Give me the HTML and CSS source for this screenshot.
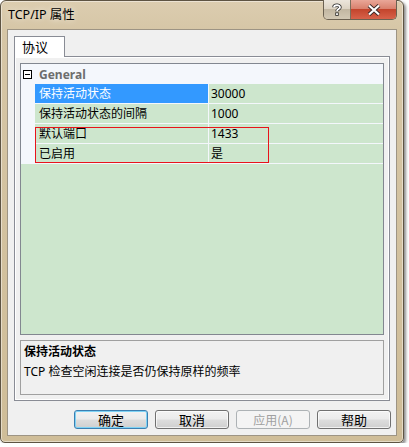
FILE: index.html
```html
<!DOCTYPE html>
<html lang="zh-CN">
<head>
<meta charset="utf-8">
<title>TCP/IP 属性</title>
<link rel="stylesheet" href="styles.css">
</head>
<body>
<div class="window">
  <div class="titlebar">
    <div class="title">TCP/IP 属性</div>
    <div class="caption-buttons">
      <div class="cap help">
        <svg width="12" height="13" viewBox="0 0 12 13"><path d="M3 4.2 C3 1.8 9 1.4 9 4.2 C9 6.2 6 6 6 8.2" fill="none" stroke="#2b2b2b" stroke-width="3.4"/><path d="M3 4.2 C3 1.8 9 1.4 9 4.2 C9 6.2 6 6 6 8.2" fill="none" stroke="#fff" stroke-width="1.8"/><rect x="4.3" y="9.4" width="3.4" height="3.4" fill="#2b2b2b"/><rect x="5.1" y="10.2" width="1.8" height="1.8" fill="#fff"/></svg>
      </div>
      <div class="cap close">
        <svg width="14" height="12" viewBox="0 0 14 12"><path d="M2 1.5 L12 10.5 M12 1.5 L2 10.5" stroke="#3a2a28" stroke-width="4"/><path d="M2 1.5 L12 10.5 M12 1.5 L2 10.5" stroke="#fff" stroke-width="2.2"/></svg>
      </div>
    </div>
  </div>
  <div class="client">
    <div class="tabs">
      <div class="tab">协议</div>
    </div>
    <div class="panel">
      <div class="grid">
        <div class="category">
          <span class="toggle"></span>
          <span class="cat-name">General</span>
        </div>
        <div class="rows">
          <div class="row">
            <span class="gutter"></span>
            <span class="name selected">保持活动状态</span>
            <span class="value">30000</span>
          </div>
          <div class="row">
            <span class="gutter"></span>
            <span class="name">保持活动状态的间隔</span>
            <span class="value">1000</span>
          </div>
          <div class="row">
            <span class="gutter"></span>
            <span class="name">默认端口</span>
            <span class="value">1433</span>
          </div>
          <div class="row">
            <span class="gutter"></span>
            <span class="name">已启用</span>
            <span class="value">是</span>
          </div>
          <div class="highlight"></div>
        </div>
      </div>
      <div class="desc">
        <div class="desc-title">保持活动状态</div>
        <div class="desc-text">TCP 检查空闲连接是否仍保持原样的频率</div>
      </div>
    </div>
    <div class="buttons">
      <button class="btn default">确定</button>
      <button class="btn">取消</button>
      <button class="btn disabled">应用(A)</button>
      <button class="btn">帮助</button>
    </div>
  </div>
</div>
</body>
</html>
```
FILE: styles.css
```css
* { box-sizing: border-box; }
html, body { margin: 0; padding: 0; background: #ffffff; }
body {
  font-family: "Noto Sans", "Noto Sans CJK SC", sans-serif;
  font-size: 12px;
  color: #000;
}
.window {
  width: 404px;
  height: 443px;
  border: 1px solid #5e5443;
  border-radius: 6px 6px 5px 5px;
  background: linear-gradient(to bottom, #dccdb0 0px, #d6c6a6 30px, #cfbd98 100%);
  box-shadow: 2px 2px 3px rgba(0,0,0,0.45), inset 0 0 0 1px rgba(255,255,255,0.45);
  display: flex;
  flex-direction: column;
}
.titlebar {
  height: 28px;
  display: flex;
  align-items: flex-start;
}
.title {
  padding: 5px 0 0 7px;
  font-size: 12.5px;
  line-height: 17px;
  color: #000;
  text-shadow: 0 0 6px rgba(255,255,255,0.8);
}
.caption-buttons {
  margin-left: auto;
  margin-right: 6px;
  margin-top: -1px;
  display: flex;
  height: 20px;
  border: 1px solid #6b6151;
  border-top: none;
  border-radius: 0 0 5px 5px;
  overflow: hidden;
}
.cap {
  height: 19px;
  display: flex;
  align-items: center;
  justify-content: center;
}
.help {
  width: 27px;
  background: linear-gradient(to bottom, #ece6dc 0%, #ddd4c4 45%, #c2b7a2 50%, #d2c8b4 100%);
  border-right: 1px solid #7b6f5c;
}
.close {
  width: 45px;
  background: linear-gradient(to bottom, #e9a798 0%, #d9816e 45%, #c3452d 50%, #d8624a 100%);
}
.client {
  margin: 0 6px;
  height: 407px;
  border: 1px solid #9d9484;
  background: #f0f0f0;
  padding: 6px 5px 0 6px;
  display: flex;
  flex-direction: column;
}
.tabs {
  display: flex;
  position: relative;
  z-index: 1;
}
.tab {
  width: 51px;
  height: 21px;
  border: 1px solid #898c95;
  border-bottom: none;
  background: #ffffff;
  padding-left: 7px;
  font-size: 13px;
  line-height: 20px;
  margin-bottom: -1px;
}
.panel {
  width: 376px;
  height: 345px;
  border: 1px solid #898c95;
  background: #f0f0f0;
  box-shadow: inset 1px 1px 0 #ffffff, inset -1px -1px 0 #ffffff;
  padding: 6px 5px 0 5px;
  display: flex;
  flex-direction: column;
}
.grid {
  height: 272px;
  border: 1px solid #828790;
  background: #cde6cd;
  display: flex;
  flex-direction: column;
}
.category {
  height: 20px;
  background: #f4f7fc;
  display: flex;
  align-items: center;
}
.toggle {
  width: 9px;
  height: 9px;
  border: 1px solid #000;
  margin-left: 2px;
  position: relative;
  background: #fff;
}
.toggle::after {
  content: "";
  position: absolute;
  left: 1px;
  right: 1px;
  top: 3px;
  height: 1px;
  background: #000;
}
.cat-name {
  margin-left: 7px;
  font-weight: bold;
  color: #6d6d6d;
  font-size: 12px;
}
.rows {
  position: relative;
  background: #f4f7fc;
}
.row {
  display: flex;
  height: 20px;
  padding-bottom: 1px;
}
.gutter {
  width: 14px;
  flex: none;
}
.name {
  width: 173px;
  flex: none;
  background: #cde6cd;
  padding-left: 4px;
  line-height: 19px;
  white-space: nowrap;
}
.name.selected {
  background: #3399ff;
  color: #ffffff;
}
.value {
  flex: 1;
  margin-left: 1px;
  background: #cde6cd;
  padding-left: 2px;
  line-height: 19px;
}
.highlight {
  position: absolute;
  left: 14px;
  top: 43px;
  width: 234px;
  height: 36px;
  border: 1.5px solid #e8141b;
}
.desc {
  margin-top: 5px;
  height: 55px;
  border: 1px solid #a0a0a0;
  padding: 2px 3px 0 3px;
}
.desc-title {
  font-weight: bold;
  line-height: 17px;
}
.desc-text {
  margin-top: 3px;
  line-height: 17px;
}
.buttons {
  margin-top: 9px;
  display: flex;
  justify-content: flex-end;
  gap: 7px;
}
.btn {
  width: 74px;
  height: 19px;
  padding: 0;
  border: 1px solid #707070;
  border-radius: 3px;
  background: linear-gradient(to bottom, #f2f2f2 0%, #ebebeb 48%, #dddddd 52%, #cfcfcf 100%);
  box-shadow: inset 0 0 0 1px rgba(255,255,255,0.7);
  font-family: "Noto Sans CJK SC", "Noto Sans", sans-serif;
  font-size: 13px;
  line-height: 16px;
  color: #000;
}
.btn.default {
  border-color: #3c7fb1;
  box-shadow: inset 0 0 0 1px #7fd3f5;
}
.btn.disabled {
  border-color: #adb2b5;
  background: #f4f4f4;
  box-shadow: none;
  color: #a0a0a0;
  font-size: 12px;
}
```
